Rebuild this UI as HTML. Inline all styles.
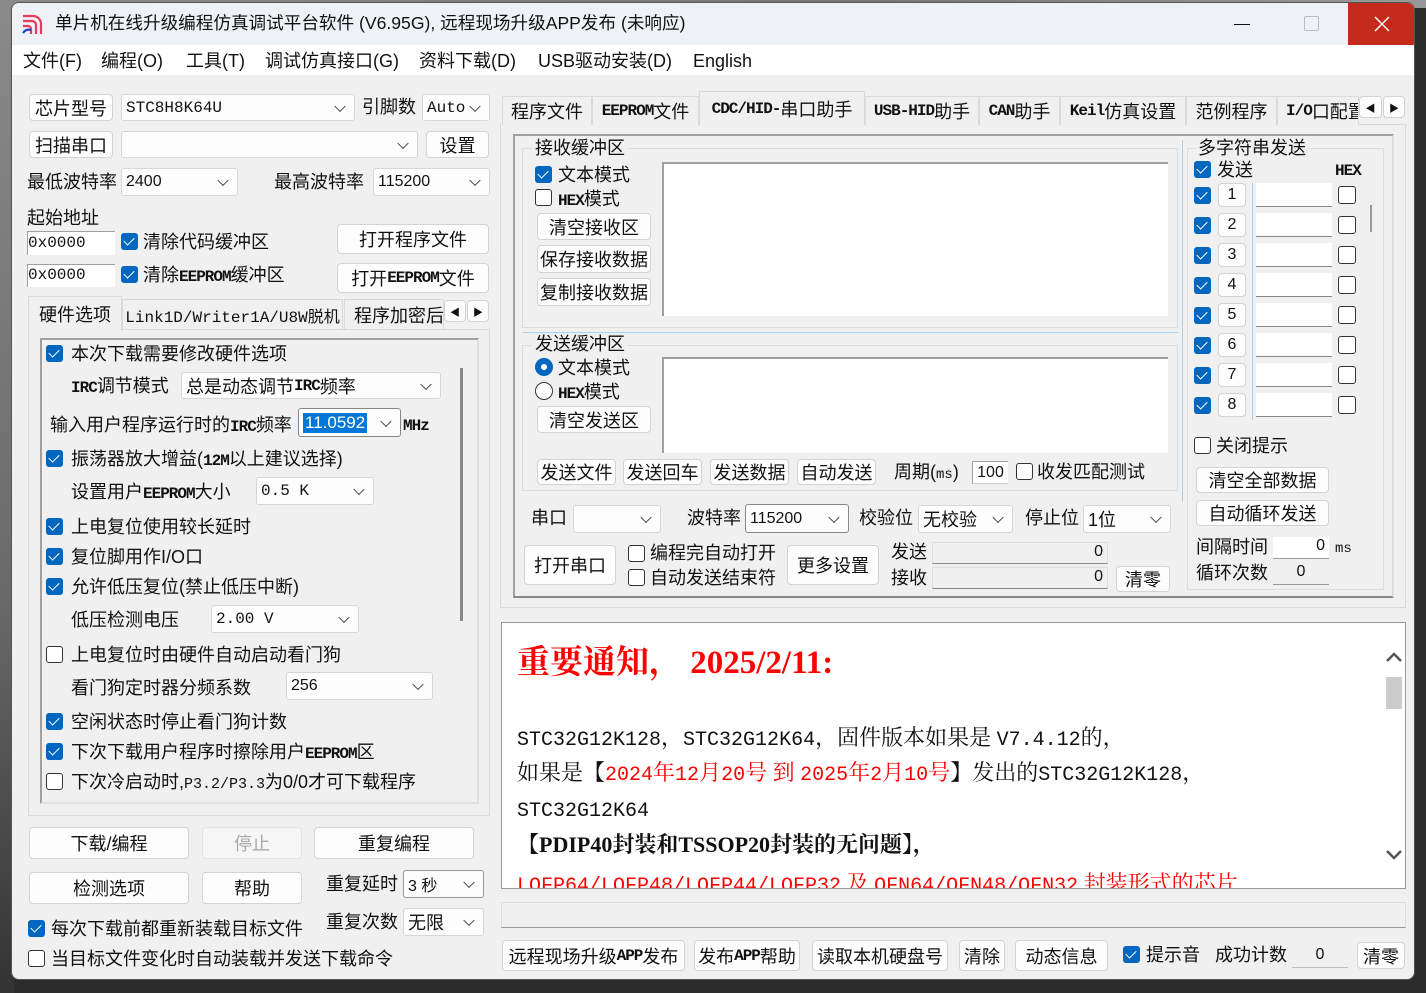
<!DOCTYPE html>
<html><head><meta charset="utf-8">
<style>
*{box-sizing:border-box;margin:0;padding:0}
body{width:1426px;height:993px;overflow:hidden;background:#2b2b2b;position:relative;font-family:"Liberation Sans","Noto Sans CJK SC",sans-serif;color:#111}
#bgl{position:absolute;left:0;top:0;width:14px;height:993px;background:linear-gradient(#8a8a8a,#6a6a6a 60%,#333)}
#bgt{position:absolute;left:0;top:0;width:1426px;height:8px;background:linear-gradient(90deg,#8a8a8a,#777 60%,#999)}
#win{position:absolute;left:11px;top:2px;width:1404px;height:978px;background:#f0f0f0;border-radius:8px;overflow:hidden;border:1px solid #555}
#tb{position:absolute;left:0;top:0;width:100%;height:42px;background:#eef2f6}
#menu{position:absolute;left:0;top:42px;width:100%;height:30px;background:#fff}
.a{position:absolute}
.t{position:absolute;white-space:nowrap;font-size:18px;line-height:22px}
.s{font-family:"Liberation Mono","Noto Sans CJK SC",monospace;font-size:15px}
.e{font-family:"Liberation Mono",monospace;font-size:16px;letter-spacing:-1px;font-weight:bold}
.btn{position:absolute;background:#fdfdfd;border:1px solid #d3d3d3;border-radius:4px;text-align:center;font-size:18px;white-space:nowrap;display:flex;align-items:center;justify-content:center}
.sel{position:absolute;background:#fdfdfd;border:1px solid #d6d6d6;border-radius:3px;font-size:16px;padding-left:4px;display:flex;align-items:center;white-space:nowrap}
.sel::after{content:"";position:absolute;right:10px;top:50%;width:7px;height:7px;border-right:1.3px solid #444;border-bottom:1.3px solid #444;transform:translateY(-70%) rotate(45deg)}
.ck{position:absolute;width:17px;height:17px;background:#0067c0;border-radius:3px}
.ck::after{content:"";position:absolute;left:5px;top:2px;width:5px;height:9px;border-right:1.6px solid #fff;border-bottom:1.6px solid #fff;transform:rotate(45deg)}
.uk{position:absolute;width:17px;height:17px;background:#fff;border:1px solid #333;border-radius:3px}
.inp{position:absolute;background:#fff;border-top:1px solid #a0a0a0;border-left:1px solid #a0a0a0;font-size:16px;white-space:nowrap}
.ta{position:absolute;background:#fff;border-top:2px solid #a0a0a0;border-left:2px solid #a0a0a0}
.grp{position:absolute;border:1px solid #dcdcdc}
.tab{position:absolute;background:#f0f0f0;border:1px solid #dadada;border-bottom:none;font-size:18px;display:flex;align-items:center;justify-content:center;white-space:nowrap}
.num{position:absolute;width:28px;height:24px;background:#fdfdfd;border:1px solid #d3d3d3;border-radius:4px;text-align:center;font-size:16px;line-height:22px}
.ml{position:absolute;width:76px;height:24px;background:#fff;border-bottom:1px solid #888}
.mu{position:absolute;width:18px;height:18px;border:1px solid #333;border-radius:3px;background:#fff}
.nt{position:absolute;white-space:nowrap;font-family:"Liberation Serif","Noto Serif CJK SC",serif;font-size:22px;line-height:26px}
.m{font-family:"Liberation Mono",monospace;font-size:20px}
.r{color:#f00}
</style></head><body>
<div id="bgl"></div><div id="bgt"></div>
<div id="win">
<div id="tb">
 <svg class="a" style="left:10px;top:10px" width="24" height="22" viewBox="0 0 24 22"><g fill="none" stroke-width="2.2"><path d="M1 3h10a8 8 0 0 1 8 8v10" stroke="#e83a5c"/><path d="M1 8h9a4 4 0 0 1 4 4v9" stroke="#e83a5c"/><path d="M1 13h5a3 3 0 0 1 3 3v5" stroke="#e83a5c"/><path d="M1 20c2-3 5-4 8-3" stroke="#1d3fd6"/></g></svg>
 <div class="t" style="left:43px;top:9px;font-size:17.6px">单片机在线升级编程仿真调试平台软件 (V6.95G), 远程现场升级APP发布 (未响应)</div>
 <div class="a" style="left:1222px;top:21px;width:16px;height:1px;background:#111"></div>
 <div class="a" style="left:1292px;top:13px;width:15px;height:15px;border:1px solid #bbb;border-radius:2px"></div>
 <div class="a" style="left:1336px;top:0;width:68px;height:42px;background:#c42b1c"></div>
 <svg class="a" style="left:1362px;top:13px" width="16" height="16"><path d="M1 1L15 15M15 1L1 15" stroke="#fff" stroke-width="1.4"/></svg>
</div>
<div id="menu">
 <div class="t" style="left:11px;top:5px">文件(F)</div>
 <div class="t" style="left:89px;top:5px">编程(O)</div>
 <div class="t" style="left:174px;top:5px">工具(T)</div>
 <div class="t" style="left:253px;top:5px">调试仿真接口(G)</div>
 <div class="t" style="left:407px;top:5px">资料下载(D)</div>
 <div class="t" style="left:526px;top:5px">USB驱动安装(D)</div>
 <div class="t" style="left:681px;top:5px">English</div>
</div>
</div>
<div class="a" style="left:0;top:0">
<div class="btn" style="left:29px;top:94px;width:84px;height:27px">芯片型号</div>
<div class="sel s" style="left:121px;top:94px;width:234px;height:27px">STC8H8K64U</div>
<div class="t" style="left:362px;top:96px">引脚数</div>
<div class="sel s" style="left:422px;top:94px;width:68px;height:27px">Auto</div>
<div class="btn" style="left:29px;top:131px;width:84px;height:27px">扫描串口</div>
<div class="sel" style="left:121px;top:131px;width:297px;height:27px"></div>
<div class="btn" style="left:426px;top:131px;width:63px;height:27px">设置</div>
<div class="t" style="left:27px;top:171px">最低波特率</div>
<div class="sel" style="left:121px;top:168px;width:117px;height:28px">2400</div>
<div class="t" style="left:274px;top:171px">最高波特率</div>
<div class="sel" style="left:373px;top:168px;width:117px;height:28px">115200</div>
<div class="t" style="left:27px;top:207px">起始地址</div>
<div class="inp s" style="left:27px;top:231px;width:88px;height:24px;line-height:22px">0x0000</div>
<div class="ck" style="left:121px;top:233px"></div><div class="t" style="left:143px;top:231px">清除代码缓冲区</div>
<div class="btn" style="left:337px;top:224px;width:152px;height:30px">打开程序文件</div>
<div class="inp s" style="left:27px;top:264px;width:88px;height:23px;line-height:21px">0x0000</div>
<div class="ck" style="left:121px;top:266px"></div><div class="t" style="left:143px;top:264px">清除<span class="e">EEPROM</span>缓冲区</div>
<div class="btn" style="left:337px;top:263px;width:152px;height:30px">打开<span class="e">EEPROM</span>文件</div>
<div class="a" style="left:28px;top:329px;width:462px;height:487px;border:1px solid #dadada;background:#f0f0f0"></div>
<div class="tab" style="left:28px;top:296px;width:94px;height:35px">硬件选项</div>
<div class="tab s" style="left:122px;top:299px;width:221px;height:30px;font-size:16px">Link1D/Writer1A/U8W脱机</div>
<div class="tab" style="left:344px;top:299px;width:100px;height:30px;justify-content:flex-start;padding-left:9px;overflow:hidden">程序加密后</div>
<div class="btn" style="left:444px;top:300px;width:22px;height:22px;font-size:10px">◀</div>
<div class="btn" style="left:467px;top:300px;width:22px;height:22px;font-size:10px">▶</div>
<div class="a" style="left:40px;top:338px;width:439px;height:466px;border:2px solid #a0a0a0;border-right-color:#e0e0e0;border-bottom-color:#e0e0e0"></div>
<div class="a" style="left:460px;top:368px;width:3px;height:253px;background:#888"></div>
<div class="ck" style="left:46px;top:345px"></div><div class="t" style="left:71px;top:343px">本次下载需要修改硬件选项</div>
<div class="t" style="left:71px;top:375px"><span class="e">IRC</span>调节模式</div>
<div class="sel" style="left:181px;top:372px;width:260px;height:27px;font-size:18px">总是动态调节<span class="e">IRC</span>频率</div>
<div class="t" style="left:50px;top:414px">输入用户程序运行时的<span class="e">IRC</span>频率</div>
<div class="sel" style="left:298px;top:408px;width:103px;height:29px;border-color:#888"><span style="background:#0078d7;color:#fff;font-size:17px;padding:0 2px">11.0592</span></div>
<div class="t e" style="left:403px;top:415px">MHz</div>
<div class="ck" style="left:46px;top:450px"></div><div class="t" style="left:71px;top:448px">振荡器放大增益(<span class="e">12M</span>以上建议选择)</div>
<div class="t" style="left:71px;top:481px">设置用户<span class="e">EEPROM</span>大小</div>
<div class="sel s" style="left:256px;top:477px;width:118px;height:28px">0.5 K</div>
<div class="ck" style="left:46px;top:518px"></div><div class="t" style="left:71px;top:516px">上电复位使用较长延时</div>
<div class="ck" style="left:46px;top:548px"></div><div class="t" style="left:71px;top:546px">复位脚用作I/O口</div>
<div class="ck" style="left:46px;top:578px"></div><div class="t" style="left:71px;top:576px">允许低压复位(禁止低压中断)</div>
<div class="t" style="left:71px;top:609px">低压检测电压</div>
<div class="sel s" style="left:211px;top:605px;width:148px;height:28px">2.00 V</div>
<div class="uk" style="left:46px;top:646px"></div><div class="t" style="left:71px;top:644px">上电复位时由硬件自动启动看门狗</div>
<div class="t" style="left:71px;top:677px">看门狗定时器分频系数</div>
<div class="sel" style="left:286px;top:672px;width:147px;height:28px">256</div>
<div class="ck" style="left:46px;top:713px"></div><div class="t" style="left:71px;top:711px">空闲状态时停止看门狗计数</div>
<div class="ck" style="left:46px;top:743px"></div><div class="t" style="left:71px;top:741px">下次下载用户程序时擦除用户<span class="e">EEPROM</span>区</div>
<div class="uk" style="left:46px;top:773px"></div><div class="t" style="left:71px;top:771px">下次冷启动时,<span class="s">P3.2/P3.3</span>为0/0才可下载程序</div>
<div class="btn" style="left:29px;top:827px;width:160px;height:32px">下载/编程</div>
<div class="btn" style="left:202px;top:827px;width:100px;height:32px;color:#aaa;background:#f6f6f6;border-color:#e3e3e3">停止</div>
<div class="btn" style="left:314px;top:827px;width:160px;height:32px">重复编程</div>
<div class="btn" style="left:29px;top:872px;width:160px;height:32px">检测选项</div>
<div class="btn" style="left:202px;top:872px;width:100px;height:32px">帮助</div>
<div class="t" style="left:326px;top:873px">重复延时</div>
<div class="sel" style="left:403px;top:870px;width:81px;height:28px;border-color:#999">3 秒</div>
<div class="t" style="left:326px;top:911px">重复次数</div>
<div class="sel" style="left:403px;top:908px;width:81px;height:28px;font-size:18px">无限</div>
<div class="ck" style="left:28px;top:920px"></div><div class="t" style="left:51px;top:918px">每次下载前都重新装载目标文件</div>
<div class="uk" style="left:28px;top:950px"></div><div class="t" style="left:51px;top:948px">当目标文件变化时自动装载并发送下载命令</div>

<div class="a" style="left:500px;top:124px;width:906px;height:484px;border:1px solid #dadada;background:#f0f0f0"></div>
<div class="tab" style="left:502px;top:96px;width:90px;height:29px">程序文件</div>
<div class="tab" style="left:592px;top:96px;width:107px;height:29px"><span class="e">EEPROM</span>文件</div>
<div class="tab" style="left:699px;top:91px;width:166px;height:35px;border-bottom:1px solid #f0f0f0"><span class="e">CDC/HID-</span>串口助手</div>
<div class="tab" style="left:865px;top:96px;width:114px;height:29px"><span class="e">USB-HID</span>助手</div>
<div class="tab" style="left:979px;top:96px;width:81px;height:29px"><span class="e">CAN</span>助手</div>
<div class="tab" style="left:1060px;top:96px;width:126px;height:29px"><span class="e">Keil</span>仿真设置</div>
<div class="tab" style="left:1186px;top:96px;width:91px;height:29px">范例程序</div>
<div class="tab" style="left:1277px;top:96px;width:82px;height:29px;justify-content:flex-start;padding-left:8px;overflow:hidden"><span class="e">I/O</span>口配置</div>
<div class="btn" style="left:1359px;top:96px;width:23px;height:22px;font-size:10px">◀</div>
<div class="btn" style="left:1383px;top:96px;width:22px;height:22px;font-size:10px">▶</div>
<div class="a" style="left:513px;top:134px;width:881px;height:464px;border:2px solid #a0a0a0;border-right-color:#ddd;border-bottom-color:#888"></div>

<div class="grp" style="left:522px;top:148px;width:656px;height:180px"></div>
<div class="t" style="left:532px;top:137px;background:#f0f0f0;padding:0 3px">接收缓冲区</div>
<div class="ta" style="left:662px;top:162px;width:506px;height:154px"></div>
<div class="ck" style="left:535px;top:166px"></div><div class="t" style="left:558px;top:164px">文本模式</div>
<div class="uk" style="left:535px;top:189px"></div><div class="t" style="left:558px;top:188px"><span class="e">HEX</span>模式</div>
<div class="btn" style="left:537px;top:213px;width:114px;height:27px">清空接收区</div>
<div class="btn" style="left:537px;top:245px;width:114px;height:28px">保存接收数据</div>
<div class="btn" style="left:537px;top:278px;width:114px;height:28px">复制接收数据</div>
<div class="a" style="left:522px;top:332px;width:656px;height:1px;background:#a8d2f0"></div>
<div class="a" style="left:1182px;top:140px;width:1px;height:362px;background:#a8d2f0"></div>
<div class="grp" style="left:522px;top:345px;width:656px;height:146px"></div>
<div class="t" style="left:532px;top:333px;background:#f0f0f0;padding:0 3px">发送缓冲区</div>
<div class="ta" style="left:662px;top:357px;width:506px;height:96px"></div>
<div class="a" style="left:535px;top:358px;width:18px;height:18px;border-radius:50%;background:#0067c0"><div class="a" style="left:6px;top:6px;width:6px;height:6px;border-radius:50%;background:#fff"></div></div>
<div class="t" style="left:558px;top:357px">文本模式</div>
<div class="a" style="left:535px;top:382px;width:18px;height:18px;border-radius:50%;border:1px solid #333;background:#fff"></div>
<div class="t" style="left:558px;top:381px"><span class="e">HEX</span>模式</div>
<div class="btn" style="left:537px;top:406px;width:114px;height:27px">清空发送区</div>
<div class="btn" style="left:537px;top:459px;width:79px;height:26px">发送文件</div>
<div class="btn" style="left:623px;top:459px;width:79px;height:26px">发送回车</div>
<div class="btn" style="left:710px;top:459px;width:79px;height:26px">发送数据</div>
<div class="btn" style="left:797px;top:459px;width:79px;height:26px">自动发送</div>
<div class="t" style="left:894px;top:461px">周期(<span class="s" style="font-size:14px">ms</span>)</div>
<div class="inp" style="left:972px;top:461px;width:36px;height:23px;text-align:center;line-height:21px;border-bottom:1px solid #ccc">100</div>
<div class="uk" style="left:1016px;top:463px"></div><div class="t" style="left:1037px;top:461px">收发匹配测试</div>

<div class="t" style="left:531px;top:507px">串口</div>
<div class="sel" style="left:573px;top:505px;width:88px;height:28px"></div>
<div class="t" style="left:687px;top:507px">波特率</div>
<div class="sel" style="left:745px;top:504px;width:104px;height:29px;border-color:#888">115200</div>
<div class="t" style="left:859px;top:507px">校验位</div>
<div class="sel" style="left:918px;top:505px;width:95px;height:28px;font-size:18px">无校验</div>
<div class="t" style="left:1025px;top:507px">停止位</div>
<div class="sel" style="left:1083px;top:505px;width:88px;height:28px;font-size:18px">1位</div>
<div class="btn" style="left:524px;top:545px;width:92px;height:40px">打开串口</div>
<div class="uk" style="left:628px;top:545px"></div><div class="t" style="left:650px;top:542px">编程完自动打开</div>
<div class="uk" style="left:628px;top:569px"></div><div class="t" style="left:650px;top:567px">自动发送结束符</div>
<div class="btn" style="left:787px;top:545px;width:92px;height:40px">更多设置</div>
<div class="t" style="left:891px;top:541px">发送</div>
<div class="a" style="left:932px;top:542px;width:176px;height:22px;background:#f0f0f0;border:1px solid #ddd;border-bottom-color:#888;text-align:right;padding-right:4px;font-size:16px">0</div>
<div class="t" style="left:891px;top:567px">接收</div>
<div class="a" style="left:932px;top:567px;width:176px;height:22px;background:#f0f0f0;border:1px solid #ddd;border-bottom-color:#888;text-align:right;padding-right:4px;font-size:16px">0</div>
<div class="btn" style="left:1116px;top:566px;width:54px;height:26px">清零</div>

<div class="grp" style="left:1187px;top:148px;width:197px;height:442px"></div>
<div class="t" style="left:1196px;top:137px;background:#f0f0f0;padding:0 2px">多字符串发送</div>
<div class="ck" style="left:1194px;top:161px"></div><div class="t" style="left:1217px;top:159px">发送</div>
<div class="t e" style="left:1335px;top:160px">HEX</div>
<div class="a" style="left:1252px;top:183px;width:1px;height:237px;background:#a8d2f0"></div>
<div class="a" style="left:1370px;top:205px;width:2px;height:27px;background:#999"></div>
<div class="uk" style="left:1194px;top:437px"></div><div class="t" style="left:1216px;top:435px">关闭提示</div>
<div class="btn" style="left:1196px;top:467px;width:133px;height:26px">清空全部数据</div>
<div class="btn" style="left:1196px;top:500px;width:133px;height:26px">自动循环发送</div>
<div class="t" style="left:1196px;top:536px">间隔时间</div>
<div class="a" style="left:1273px;top:537px;width:56px;height:22px;background:#fff;border-bottom:1px solid #999;text-align:right;padding-right:4px;font-size:16px">0</div>
<div class="t s" style="left:1335px;top:538px;font-size:14px">ms</div>
<div class="t" style="left:1196px;top:562px">循环次数</div>
<div class="a" style="left:1273px;top:563px;width:56px;height:22px;background:#f0f0f0;border-bottom:1px solid #999;text-align:center;font-size:16px">0</div>

<div class="a" style="left:501px;top:622px;width:905px;height:267px;background:#fff;border:1px solid #999;overflow:hidden">
 <div class="nt r" style="left:15px;top:20px;font-size:33px;line-height:40px;font-weight:bold">重要通知，&nbsp;2025/2/11:</div>
 <div class="nt" style="left:15px;top:102px"><span class="m">STC32G12K128</span>，<span class="m">STC32G12K64</span>，固件版本如果是 <span class="m">V7.4.12</span>的，</div>
 <div class="nt" style="left:15px;top:137px">如果是【<span class="r"><span class="m">2024</span>年<span class="m">12</span>月<span class="m">20</span>号 到 <span class="m">2025</span>年<span class="m">2</span>月<span class="m">10</span>号</span>】发出的<span class="m">STC32G12K128</span>，</div>
 <div class="nt" style="left:15px;top:173px"><span class="m">STC32G12K64</span></div>
 <div class="nt" style="left:15px;top:209px;font-weight:bold">【PDIP40封装和TSSOP20封装的无问题】，</div>
 <div class="nt r" style="left:15px;top:248px"><span class="m">LQFP64/LQFP48/LQFP44/LQFP32</span> 及 <span class="m">QFN64/QFN48/QFN32</span> 封装形式的芯片.</div>
 <div class="a" style="left:880px;top:0;width:24px;height:278px;background:#fff"></div>
 <svg class="a" style="left:883px;top:28px" width="18" height="12"><path d="M2 10L9 3L16 10" fill="none" stroke="#555" stroke-width="2.5"/></svg>
 <div class="a" style="left:884px;top:54px;width:16px;height:32px;background:#ccc"></div>
 <svg class="a" style="left:883px;top:226px" width="18" height="12"><path d="M2 2L9 9L16 2" fill="none" stroke="#555" stroke-width="2.5"/></svg>
</div>
<div class="a" style="left:501px;top:902px;width:905px;height:26px;background:#f0f0f0;border:1px solid #ddd;border-bottom-color:#999"></div>
<div class="btn" style="left:502px;top:940px;width:183px;height:31px">远程现场升级<span class="e">APP</span>发布</div>
<div class="btn" style="left:694px;top:940px;width:106px;height:31px">发布<span class="e">APP</span>帮助</div>
<div class="btn" style="left:812px;top:940px;width:136px;height:31px">读取本机硬盘号</div>
<div class="btn" style="left:959px;top:940px;width:46px;height:31px">清除</div>
<div class="btn" style="left:1015px;top:940px;width:93px;height:31px">动态信息</div>
<div class="ck" style="left:1123px;top:946px"></div><div class="t" style="left:1146px;top:944px">提示音</div>
<div class="t" style="left:1215px;top:944px">成功计数</div>
<div class="a" style="left:1292px;top:942px;width:56px;height:26px;background:#f0f0f0;border-bottom:1px solid #bbb;text-align:center;font-size:16px;line-height:26px">0</div>
<div class="btn" style="left:1357px;top:942px;width:48px;height:27px">清零</div>
</div>
<div class="a" style="left:0;top:0">
<div class="ck" style="left:1194px;top:187px"></div><div class="num" style="left:1218px;top:183px">1</div><div class="ml" style="left:1256px;top:183px"></div><div class="mu" style="left:1338px;top:186px"></div>
<div class="ck" style="left:1194px;top:217px"></div><div class="num" style="left:1218px;top:213px">2</div><div class="ml" style="left:1256px;top:213px"></div><div class="mu" style="left:1338px;top:216px"></div>
<div class="ck" style="left:1194px;top:247px"></div><div class="num" style="left:1218px;top:243px">3</div><div class="ml" style="left:1256px;top:243px"></div><div class="mu" style="left:1338px;top:246px"></div>
<div class="ck" style="left:1194px;top:277px"></div><div class="num" style="left:1218px;top:273px">4</div><div class="ml" style="left:1256px;top:273px"></div><div class="mu" style="left:1338px;top:276px"></div>
<div class="ck" style="left:1194px;top:307px"></div><div class="num" style="left:1218px;top:303px">5</div><div class="ml" style="left:1256px;top:303px"></div><div class="mu" style="left:1338px;top:306px"></div>
<div class="ck" style="left:1194px;top:337px"></div><div class="num" style="left:1218px;top:333px">6</div><div class="ml" style="left:1256px;top:333px"></div><div class="mu" style="left:1338px;top:336px"></div>
<div class="ck" style="left:1194px;top:367px"></div><div class="num" style="left:1218px;top:363px">7</div><div class="ml" style="left:1256px;top:363px"></div><div class="mu" style="left:1338px;top:366px"></div>
<div class="ck" style="left:1194px;top:397px"></div><div class="num" style="left:1218px;top:393px">8</div><div class="ml" style="left:1256px;top:393px"></div><div class="mu" style="left:1338px;top:396px"></div>
</div>
</body></html>
